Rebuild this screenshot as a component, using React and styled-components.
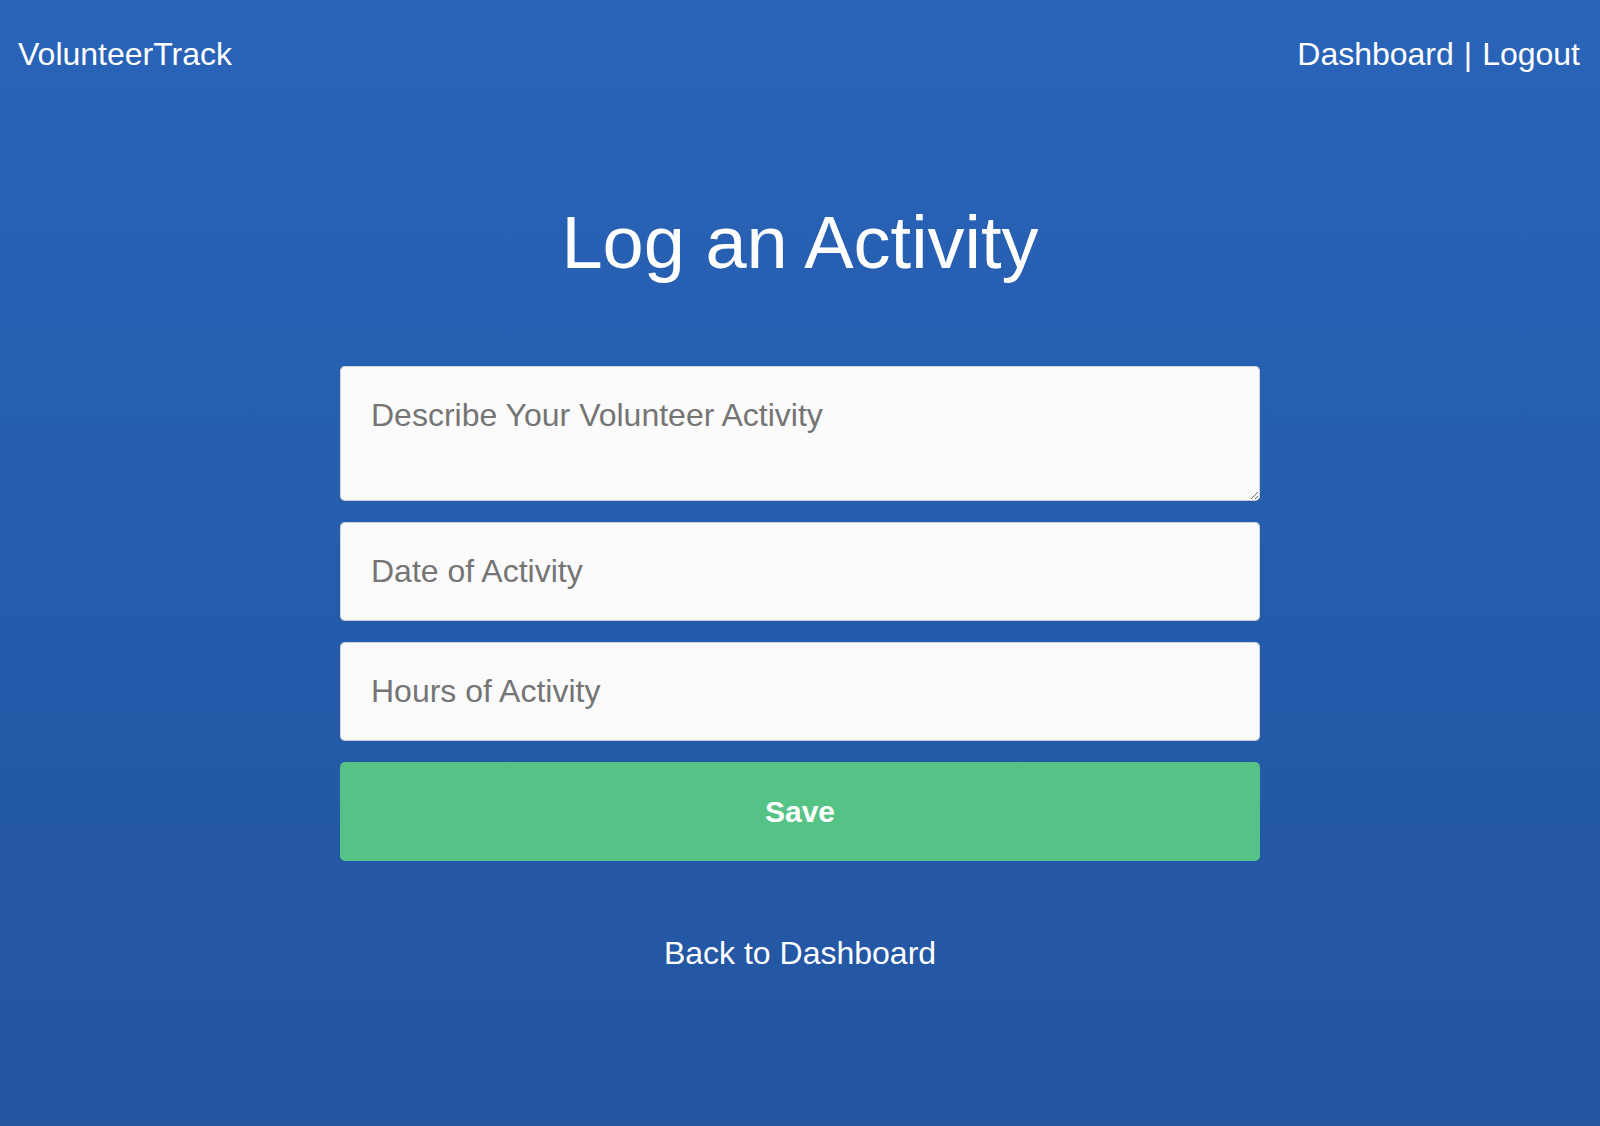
import React from 'react'
import styled, { createGlobalStyle } from 'styled-components'

const GlobalStyle = createGlobalStyle`
  html, body {
    margin: 0;
    padding: 0;
  }
  body {
    font-family: "Liberation Sans", Arial, sans-serif;
  }
  * {
    box-sizing: border-box;
  }
`

const Page = styled.div`
  min-height: 100vh;
  background: linear-gradient(180deg, #2964b9 0%, #2459a7 70%, #2455a1 100%);
  color: #fff;
  display: flex;
  flex-direction: column;
`

const Header = styled.header`
  display: flex;
  justify-content: space-between;
  align-items: center;
  padding: 36px 20px 0 18px;
`

const Brand = styled.a`
  font-size: 32px;
  color: #fff;
  text-decoration: none;
`

const Nav = styled.nav`
  font-size: 32px;
  display: flex;
  gap: 10px;
`

const NavLink = styled.a`
  color: #fff;
  text-decoration: none;
`

const Main = styled.main`
  display: flex;
  flex-direction: column;
  align-items: center;
`

const Title = styled.h1`
  font-size: 74px;
  font-weight: 400;
  margin: 127px 0 81px;
`

const Form = styled.form`
  width: 920px;
  display: flex;
  flex-direction: column;
  gap: 21px;
`

const fieldStyles = `
  width: 100%;
  font-family: "Liberation Sans", Arial, sans-serif;
  font-size: 32px;
  padding: 30px;
  border: 1px solid #cfd3d8;
  border-bottom-color: #c4c7cc;
  border-radius: 5px;
  background: #fbfbfb;
  color: #333;
  outline: none;
  &::placeholder {
    color: #757575;
  }
`

const TextArea = styled.textarea`
  ${fieldStyles}
  display: block;
  height: 135px;
  line-height: normal;
`

const Input = styled.input`
  ${fieldStyles}
  height: 99px;
`

const SaveButton = styled.button`
  height: 99px;
  border: none;
  border-radius: 5px;
  background: #55c385;
  color: #fff;
  font-family: "Liberation Sans", Arial, sans-serif;
  font-size: 30px;
  font-weight: 700;
  cursor: pointer;
`

const BackLink = styled.a`
  margin-top: 74px;
  font-size: 32px;
  color: #fff;
  text-decoration: none;
`

const App = () => {
  return (
    <Page>
      <GlobalStyle />
      <Header>
        <Brand href="#">VolunteerTrack</Brand>
        <Nav>
          <NavLink href="#">Dashboard</NavLink>
          <span>|</span>
          <NavLink href="#">Logout</NavLink>
        </Nav>
      </Header>
      <Main>
        <Title>Log an Activity</Title>
        <Form onSubmit={e => e.preventDefault()}>
          <TextArea rows={2} placeholder="Describe Your Volunteer Activity" />
          <Input type="text" placeholder="Date of Activity" />
          <Input type="text" placeholder="Hours of Activity" />
          <SaveButton type="submit">Save</SaveButton>
        </Form>
        <BackLink href="#">Back to Dashboard</BackLink>
      </Main>
    </Page>
  )
}

export default App
